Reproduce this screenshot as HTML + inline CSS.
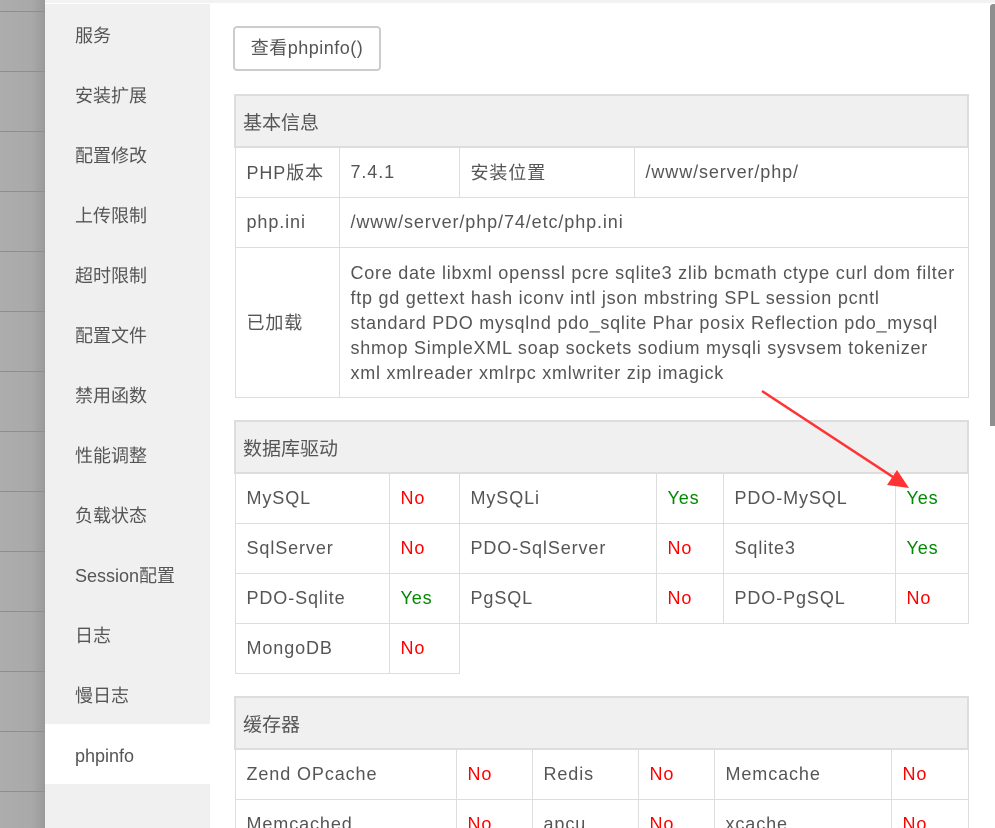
<!DOCTYPE html>
<html><head><meta charset="utf-8"><style>
*{margin:0;padding:0;box-sizing:border-box}
html,body{width:995px;height:828px;overflow:hidden}
body{background:#fff;font-family:"Liberation Sans","Noto Sans CJK SC",sans-serif;color:#555;font-size:18px;position:relative}
#strip{position:absolute;left:0;top:0;width:45px;height:828px;background:linear-gradient(to right,#adadad,#a9a9a9 70%,#9a9a9a)}
#strip i{position:absolute;left:0;width:45px;height:1px;background:#8e8e8e}
#topbar{position:absolute;left:45px;top:0;width:950px;height:3px;background:#f2f2f2}
#side{position:absolute;left:45px;top:4px;width:165px;height:824px;background:#f0f0f0}
#side div{height:60px;line-height:60px;padding-left:30px;padding-top:2px;font-size:18px;color:#555}
#side div.act{background:#fff}
#scroll{position:absolute;left:990px;top:4px;width:5px;height:422px;background:#8f8f8f;border-radius:3px 0 0 0}
.btn{position:absolute;left:233px;top:26px;width:148px;height:45px;border:2px solid #ccc;border-radius:4px;line-height:41px;text-align:center;font-size:18px;color:#555;letter-spacing:0.5px}
table{position:absolute;left:234px;width:733px;border-collapse:collapse;table-layout:fixed}
td{border:1px solid #ddd;padding:0 0 0 11px;height:50px;font-size:18px;white-space:nowrap;overflow:hidden;letter-spacing:0.9px}
th{border:2px solid #ddd;background:#f0f0f0;text-align:left;font-weight:normal;height:52px;padding-left:7px;font-size:19px;color:#555}
.n{color:#f00}.y{color:#080}
.ext{line-height:25px;white-space:nowrap;font-size:18px;padding-top:2px;letter-spacing:0.75px}
td.e{border:none}
</style></head><body>
<div id="strip"><i style="top:11px"></i><i style="top:71px"></i><i style="top:131px"></i><i style="top:191px"></i><i style="top:251px"></i><i style="top:311px"></i><i style="top:371px"></i><i style="top:431px"></i><i style="top:491px"></i><i style="top:551px"></i><i style="top:611px"></i><i style="top:671px"></i><i style="top:731px"></i><i style="top:791px"></i></div>
<div id="topbar"></div>
<div id="side">
<div>服务</div><div>安装扩展</div><div>配置修改</div><div>上传限制</div><div>超时限制</div><div>配置文件</div><div>禁用函数</div><div>性能调整</div><div>负载状态</div><div>Session配置</div><div>日志</div><div>慢日志</div><div class="act">phpinfo</div>
</div>
<div id="scroll"></div>
<div class="btn">查看phpinfo()</div>

<table style="top:94px">
<colgroup><col style="width:104px"><col style="width:120px"><col style="width:175px"><col style="width:334px"></colgroup>
<tr><th colspan="4">基本信息</th></tr>
<tr><td>PHP版本</td><td>7.4.1</td><td>安装位置</td><td>/www/server/php/</td></tr>
<tr><td>php.ini</td><td colspan="3">/www/server/php/74/etc/php.ini</td></tr>
<tr><td style="height:150px">已加载</td><td colspan="3" class="ext">Core date libxml openssl pcre sqlite3 zlib bcmath ctype curl dom filter<br>ftp gd gettext hash iconv intl json mbstring SPL session pcntl<br>standard PDO mysqlnd pdo_sqlite Phar posix Reflection pdo_mysql<br>shmop SimpleXML soap sockets sodium mysqli sysvsem tokenizer<br>xml xmlreader xmlrpc xmlwriter zip imagick</td></tr>
</table>

<table style="top:420px">
<colgroup><col style="width:154px"><col style="width:70px"><col style="width:197px"><col style="width:67px"><col style="width:172px"><col style="width:73px"></colgroup>
<tr><th colspan="6">数据库驱动</th></tr>
<tr><td>MySQL</td><td class="n">No</td><td>MySQLi</td><td class="y">Yes</td><td>PDO-MySQL</td><td class="y">Yes</td></tr>
<tr><td>SqlServer</td><td class="n">No</td><td>PDO-SqlServer</td><td class="n">No</td><td>Sqlite3</td><td class="y">Yes</td></tr>
<tr><td>PDO-Sqlite</td><td class="y">Yes</td><td>PgSQL</td><td class="n">No</td><td>PDO-PgSQL</td><td class="n">No</td></tr>
<tr><td>MongoDB</td><td class="n">No</td><td class="e"></td><td class="e"></td><td class="e"></td><td class="e"></td></tr>
</table>

<table style="top:696px">
<colgroup><col style="width:221px"><col style="width:76px"><col style="width:106px"><col style="width:76px"><col style="width:177px"><col style="width:77px"></colgroup>
<tr><th colspan="6">缓存器</th></tr>
<tr><td>Zend OPcache</td><td class="n">No</td><td>Redis</td><td class="n">No</td><td>Memcache</td><td class="n">No</td></tr>
<tr><td>Memcached</td><td class="n">No</td><td>apcu</td><td class="n">No</td><td>xcache</td><td class="n">No</td></tr>
</table>

<svg style="position:absolute;left:0;top:0" width="995" height="828">
<line x1="762" y1="391" x2="893" y2="477" stroke="#f33" stroke-width="2.5"/>
<polygon points="909,488 887,485 897,470" fill="#f33"/>
</svg>
</body></html>
